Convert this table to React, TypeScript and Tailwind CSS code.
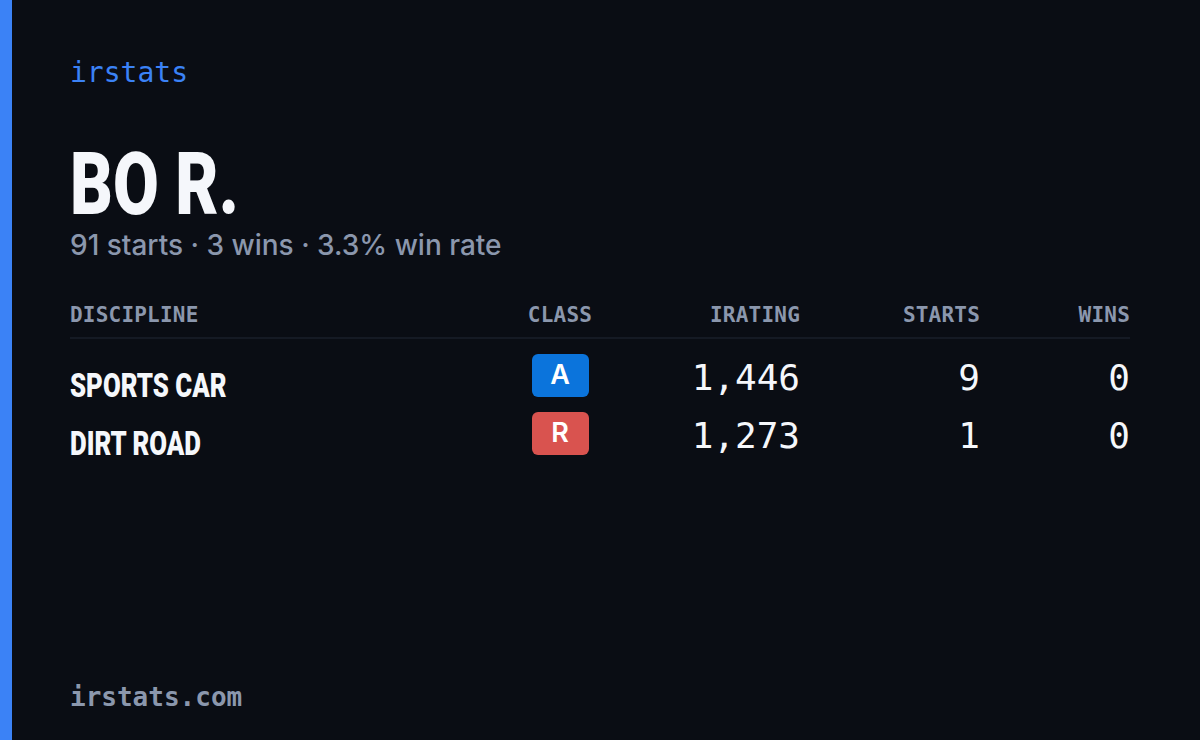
import React from "react";

const mono = { fontFamily: '"DejaVu Sans Mono", "Liberation Mono", monospace' } as React.CSSProperties;
const cond = { fontFamily: 'Roboto, "Liberation Sans", sans-serif' } as React.CSSProperties;

const rows = [
  { name: "SPORTS CAR", cls: "A", color: "bg-[#0b74dc]", ir: "1,446", starts: "9", wins: "0" },
  { name: "DIRT ROAD", cls: "R", color: "bg-[#d9534f]", ir: "1,273", starts: "1", wins: "0" },
];

export default function App() {
  return (
    <div className="flex h-[740px] w-[1200px] overflow-hidden bg-[#0a0d14]">
      <div className="w-[12px] shrink-0 bg-[#3b82f6]" />
      <div className="flex flex-1 flex-col pl-[58px] pr-[70px] pt-[53px] pb-[26px]">
        <div className="text-[28px] leading-[40px] text-[#3b82f6]" style={mono}>
          irstats
        </div>
        <div className="mt-[45px] h-[84px] text-[88px] leading-[84px] text-[#f5f7fb]">
          <span className="inline-block origin-left scale-x-[0.755] whitespace-nowrap font-black" style={cond}>
            BO R.
          </span>
        </div>
        <div
          className="mt-[5px] text-[28px] font-medium leading-[36px] text-[#8b97ad]"
          style={{ fontFamily: 'Inter, "Open Sans", sans-serif' }}
        >
          91 starts · 3 wins · 3.3% win rate
        </div>

        <div className="mt-[38px]">
          <div
            className="grid grid-cols-[430px_120px_180px_180px_150px] border-b-2 border-[#151a24] pb-[8px] text-[21px] font-bold leading-[28px] tracking-[0.01em] text-[#8b97ad]"
            style={mono}
          >
            <div>DISCIPLINE</div>
            <div className="text-center">CLASS</div>
            <div className="text-right">IRATING</div>
            <div className="text-right">STARTS</div>
            <div className="text-right">WINS</div>
          </div>
          <div className="pt-[15px]">
            {rows.map((r) => (
              <div key={r.name} className="grid h-[58px] grid-cols-[430px_120px_180px_180px_150px] items-start">
                <div className="pt-[12px] text-[33px] leading-[38px] text-[#f5f7fb]">
                  <span className="inline-block origin-left scale-x-[0.78] whitespace-nowrap font-black" style={cond}>
                    {r.name}
                  </span>
                </div>
                <div className="flex justify-center">
                  <div
                    className={`flex h-[43px] w-[57px] items-center justify-center rounded-[6px] ${r.color} text-[27px] font-semibold text-white`}
                    style={{ fontFamily: 'Inter, "Open Sans", sans-serif' }}
                  >
                    {r.cls}
                  </div>
                </div>
                <div className="pt-[1px] text-right text-[36px] leading-[46px] text-[#f5f7fb]" style={mono}>
                  {r.ir}
                </div>
                <div className="pt-[1px] text-right text-[36px] leading-[46px] text-[#f5f7fb]" style={mono}>
                  {r.starts}
                </div>
                <div className="pt-[1px] text-right text-[36px] leading-[46px] text-[#f5f7fb]" style={mono}>
                  {r.wins}
                </div>
              </div>
            ))}
          </div>
        </div>

        <div className="mt-auto text-[26px] font-bold leading-[34px] text-[#8b97ad]" style={mono}>
          irstats.com
        </div>
      </div>
    </div>
  );
}
